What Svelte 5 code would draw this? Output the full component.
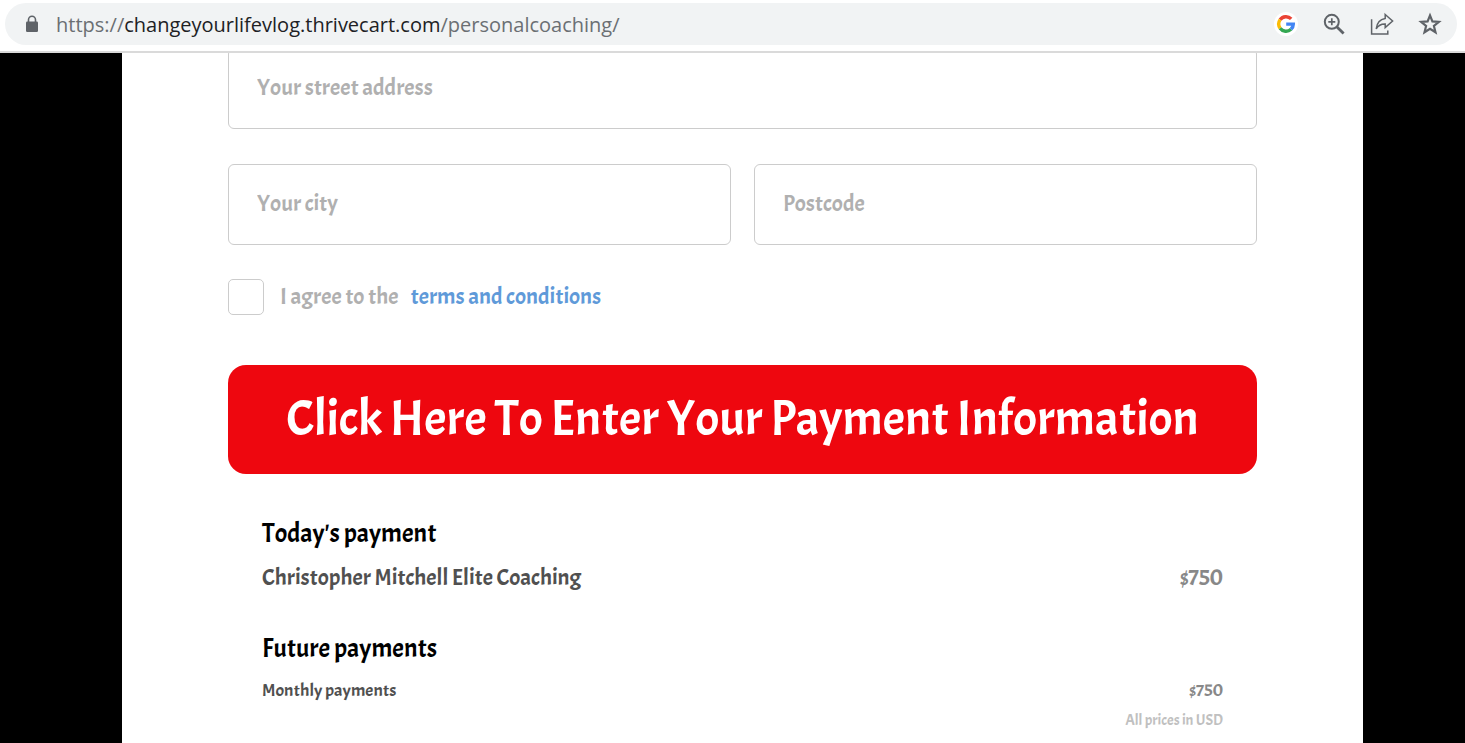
<script lang="ts">
let street = $state("");
let city = $state("");
let postcode = $state("");
let agreed = $state(false);

const today = [{ name: "Christopher Mitchell Elite Coaching", price: "$750" }];
const future = [{ name: "Monthly payments", price: "$750" }];
</script>

<div class="browser">
  <header class="toolbar">
    <div class="address-bar">
      <svg class="lock" viewBox="0 0 14 18" width="14" height="18" aria-hidden="true">
        <path d="M3.5 8V4.8a3.5 3.5 0 0 1 7 0V8" fill="none" stroke="#5f6368" stroke-width="1.6" />
        <rect x="1" y="6.5" width="12" height="10.5" rx="1.2" fill="#5f6368" />
      </svg>
      <p class="url">https://<span>changeyourlifevlog.thrivecart.com</span>/personalcoaching/</p>

      <div class="actions">
        <button type="button" aria-label="Search with Google">
          <svg viewBox="0 0 24 24" width="24" height="24">
            <circle cx="12" cy="12" r="12" fill="#fff" />
            <g fill="none" stroke-width="3.4">
              <path d="M6.1 7.8A7.3 7.3 0 0 1 17.2 6.9" stroke="#ea4335" />
              <path d="M6.1 16.2a7.3 7.3 0 0 1 0-8.4" stroke="#fbbc05" />
              <path d="M17 17.3A7.3 7.3 0 0 1 6.1 16.2" stroke="#34a853" />
              <path d="M12.2 12.1h7.1a7.3 7.3 0 0 1-2.3 5.2" stroke="#4285f4" />
            </g>
          </svg>
        </button>
        <button type="button" aria-label="Zoom">
          <svg viewBox="0 0 24 24" width="24" height="24" fill="none" stroke="#5f6368">
            <circle cx="9.8" cy="9.8" r="7" stroke-width="2" />
            <path d="M15 15l6.6 6.6" stroke-width="2.8" />
            <path d="M9.8 6.3v7M6.3 9.8h7" stroke-width="1.7" />
          </svg>
        </button>
        <button type="button" aria-label="Share this page">
          <svg viewBox="0 0 24 24" width="24" height="24" fill="none" stroke="#5f6368" stroke-width="1.5">
            <path d="M1.6 7.2v14.9h16.2v-3.6" />
            <path d="M15.2 2.5l7.4 6.5-7.4 6.6v-3.7c-4.2-.1-7 1.4-9 4.9.6-5.2 3.5-9.6 9-10.4z" />
          </svg>
        </button>
        <button type="button" aria-label="Bookmark this page">
          <svg viewBox="0 0 24 24" width="24" height="24" fill="none" stroke="#5f6368" stroke-width="2.2">
            <path d="M12 3.4l2.4 6 6.5.5-5 4.1 1.6 6.3-5.5-3.5-5.5 3.5 1.6-6.3-5-4.1 6.5-.5z" />
          </svg>
        </button>
      </div>
    </div>
  </header>

  <div class="viewport">
    <main class="sheet">
      <form onsubmit={(e) => e.preventDefault()}>
        <input class="field" type="text" placeholder="Your street address" aria-label="Your street address" bind:value={street} />
        <div class="field-row">
          <input class="field" type="text" placeholder="Your city" aria-label="Your city" bind:value={city} />
          <input class="field" type="text" placeholder="Postcode" aria-label="Postcode" bind:value={postcode} />
        </div>
        <div class="terms">
          <input id="agree" type="checkbox" bind:checked={agreed} />
          <label for="agree">I agree to the</label>
          <a href="#terms">terms and conditions</a>
        </div>
        <button class="submit" type="submit">Click Here To Enter Your Payment Information</button>
      </form>

      <section class="summary">
        <h2>Today's payment</h2>
        {#each today as item}
        <p class="line">
          <span>{item.name}</span>
          <span class="price">{item.price}</span>
        </p>
        {/each}

        <h2 class="future">Future payments</h2>
        {#each future as item}
        <p class="line small">
          <span>{item.name}</span>
          <span class="price">{item.price}</span>
        </p>
        {/each}
        <p class="currency">All prices in USD</p>
      </section>
    </main>
  </div>
</div>

<style>
:global(body) {
  background: #000;
}

.browser {
  display: flex;
  flex-direction: column;
  height: 100vh;
  overflow: hidden;
}

.toolbar {
  flex: none;
  padding: 3px 8px 6px 5px;
  background: #fff;
  border-bottom: 2px solid #dadada;
}

.address-bar {
  display: flex;
  align-items: center;
  height: 42px;
  padding: 0 15px 0 20px;
  border-radius: 21px;
  background: #f1f3f4;
}

.lock {
  flex: none;
  margin-right: 17px;
}

.url {
  flex: 1;
  margin: 0;
  padding-top: 2px;
  font-family: "Segoe UI", "Open Sans", sans-serif;
  font-size: 20px;
  line-height: 28px;
  white-space: nowrap;
  overflow: hidden;
  color: #6b6f73;
}

.url span {
  color: #202124;
}

.actions {
  display: flex;
  gap: 24px;
}

.actions button {
  display: block;
  width: 24px;
  height: 24px;
  padding: 0;
  border: 0;
  background: none;
  cursor: pointer;
}

.actions svg {
  display: block;
}

/* the page is scrolled a few pixels into the street field */
.viewport {
  flex: 1;
  display: flex;
  min-height: 0;
  padding: 0 102px 0 122px;
  overflow: hidden;
  font-family: Acme, "Liberation Sans Narrow", Lato, sans-serif;
}

.sheet {
  flex: 1;
  margin-top: -5px;
  padding: 0 106px;
  background: #fff;
}

.field {
  display: block;
  box-sizing: border-box;
  width: 100%;
  height: 81px;
  padding: 0 28px 3px;
  border: 1px solid #ccc;
  border-radius: 6px;
  background: #fff;
  font: inherit;
  font-size: 23px;
  color: #555;
}

.field::placeholder {
  color: #b0b0b0;
  opacity: 1;
}

.field-row {
  display: grid;
  grid-template-columns: 1fr 1fr;
  gap: 23px;
  margin-top: 35px;
}

.terms {
  display: flex;
  align-items: center;
  margin-top: 34px;
  font-size: 23px;
  line-height: 36px;
  color: #b0b0b0;
}

.terms input {
  appearance: none;
  width: 36px;
  height: 36px;
  margin: 0 16px 0 0;
  border: 1px solid #ccc;
  border-radius: 5px;
  background: #fff;
}

.terms input:checked {
  background: #5f9ad9;
}

.terms a {
  margin-left: 12px;
  color: #5f9ad9;
  text-decoration: none;
}

.submit {
  display: block;
  width: 100%;
  height: 109px;
  margin-top: 50px;
  padding: 0 0 2px;
  border: 0;
  border-radius: 18px;
  background: #ee070f;
  font: inherit;
  font-size: 50px;
  color: #fff;
  cursor: pointer;
}

.summary {
  padding: 42px 34px 0;
}

h2 {
  margin: 0;
  font-size: 26px;
  font-weight: 400;
  line-height: 36px;
  color: #000;
}

.future {
  margin-top: 36px;
}

.line {
  display: flex;
  justify-content: space-between;
  margin: 9px 0 0;
  font-size: 23px;
  line-height: 34px;
  color: #505050;
}

.price {
  color: #888;
}

.small {
  font-size: 18px;
  line-height: 30px;
}

.currency {
  margin: 0;
  font-size: 15px;
  line-height: 30px;
  text-align: right;
  color: #c0c0c0;
}
</style>
